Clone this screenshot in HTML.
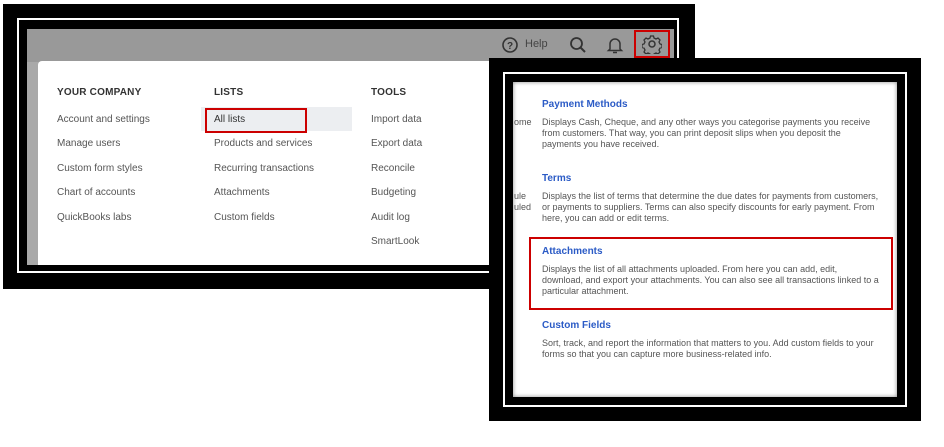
<!DOCTYPE html>
<html><head><style>
body{margin:0;width:944px;height:447px;background:#fff;position:relative;overflow:hidden;font-family:"Liberation Sans",sans-serif}
.a{position:absolute}
.h{font-size:10px;color:#333;font-weight:bold;letter-spacing:.2px}
.i{font-size:10px;color:#555}
.t{font-size:10px;color:#2b5bc6;font-weight:bold}
.d{font-size:9px;color:#555;line-height:11px}
</style></head><body>
<!-- left frame -->
<div class="a" style="left:3px;top:4px;width:692px;height:285px;background:#000"></div>
<div class="a" style="left:17px;top:18px;width:662px;height:255px;border:2px solid #fff;box-sizing:border-box"></div>
<div class="a" style="left:27px;top:29px;width:647px;height:236px;background:#a9a9a9"></div>
<div class="a" style="left:27px;top:29px;width:647px;height:33px;background:#999"></div>
<div class="a" style="left:38px;top:61px;width:636px;height:204px;background:#fff;border-radius:4px 0 0 0"></div>
<div class="a h" style="left:57px;top:87px">YOUR COMPANY</div>
<div class="a h" style="left:214px;top:87px">LISTS</div>
<div class="a h" style="left:371px;top:87px">TOOLS</div>
<div class="a" style="left:201px;top:107px;width:151px;height:24px;background:#eceef1"></div>
<div class="a" style="left:205px;top:108px;width:102px;height:25px;border:2px solid #c00;box-sizing:border-box"></div>
<div class="a i" style="left:57px;top:108px;line-height:24.4px">Account and settings<br>Manage users<br>Custom form styles<br>Chart of accounts<br>QuickBooks labs</div>
<div class="a i" style="left:214px;top:108px;line-height:24.4px"><span style="color:#333">All lists</span><br>Products and services<br>Recurring transactions<br>Attachments<br>Custom fields</div>
<div class="a i" style="left:371px;top:108px;line-height:24.4px">Import data<br>Export data<br>Reconcile<br>Budgeting<br>Audit log<br>SmartLook</div>
<!-- header icons -->
<svg class="a" style="left:500px;top:35px" width="20" height="20" viewBox="0 0 20 20"><circle cx="10" cy="10" r="7" fill="none" stroke="#333" stroke-width="1.6"/><text x="10" y="14" font-size="10" font-weight="bold" text-anchor="middle" fill="#333" font-family="Liberation Sans">?</text></svg>
<div class="a" style="left:525px;top:38px;font-size:11px;color:#444">Help</div>
<svg class="a" style="left:568px;top:35px" width="20" height="20"><circle cx="8.5" cy="8.5" r="5.5" fill="none" stroke="#333" stroke-width="1.8"/><path d="M12.5 12.5L17 17" stroke="#333" stroke-width="2"/></svg>
<svg class="a" style="left:606px;top:35px" width="18" height="20"><path d="M4 14V9a5 5 0 0 1 10 0v5l1.5 1.5h-13z" fill="none" stroke="#333" stroke-width="1.5"/><path d="M7 17.5h4" stroke="#333" stroke-width="1.5"/></svg>
<div class="a" style="left:634px;top:30px;width:36px;height:28px;border:2px solid #c00;box-sizing:border-box"></div>
<svg class="a" style="left:642px;top:34px" width="20" height="20" viewBox="0 0 20 20"><circle cx="10" cy="10" r="3" fill="none" stroke="#333" stroke-width="1.5"/><path d="M8.5 2h3l.5 2 2 1 2-1 2 2-1 2 1 2 2 .5v3l-2 .5-1 2 1 2-2 2-2-1-2 1-.5 2h-3l-.5-2-2-1-2 1-2-2 1-2-1-2-2-.5v-3l2-.5 1-2-1-2 2-2 2 1 2-1z" fill="none" stroke="#333" stroke-width="1.3"/></svg>
<!-- right frame -->
<div class="a" style="left:489px;top:58px;width:432px;height:363px;background:#000"></div>
<div class="a" style="left:503px;top:72px;width:404px;height:335px;border:2px solid #fff;box-sizing:border-box"></div>
<div class="a" style="left:513px;top:82px;width:384px;height:315px;background:#fff;box-shadow:inset 0 0 4px #888"></div>
<div class="a d" style="left:514px;top:117px">ome</div>
<div class="a d" style="left:514px;top:191px">ule<br>uled</div>
<div class="a t" style="left:542px;top:99px">Payment Methods</div>
<div class="a d" style="left:542px;top:117px;width:355px;white-space:nowrap">Displays Cash, Cheque, and any other ways you categorise payments you receive<br>from customers. That way, you can print deposit slips when you deposit the<br>payments you have received.</div>
<div class="a t" style="left:542px;top:173px">Terms</div>
<div class="a d" style="left:542px;top:191px;width:355px;white-space:nowrap">Displays the list of terms that determine the due dates for payments from customers,<br>or payments to suppliers. Terms can also specify discounts for early payment. From<br>here, you can add or edit terms.</div>
<div class="a" style="left:529px;top:237px;width:364px;height:73px;border:2px solid #c00;box-sizing:border-box"></div>
<div class="a t" style="left:542px;top:246px">Attachments</div>
<div class="a d" style="left:542px;top:264px;width:355px;white-space:nowrap">Displays the list of all attachments uploaded. From here you can add, edit,<br>download, and export your attachments. You can also see all transactions linked to a<br>particular attachment.</div>
<div class="a t" style="left:542px;top:320px">Custom Fields</div>
<div class="a d" style="left:542px;top:338px;width:355px;white-space:nowrap">Sort, track, and report the information that matters to you. Add custom fields to your<br>forms so that you can capture more business-related info.</div>
</body></html>
